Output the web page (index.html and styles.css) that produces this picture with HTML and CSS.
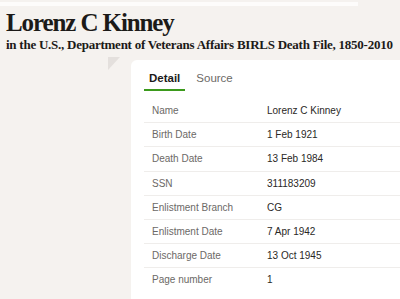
FILE: index.html
```html
<!DOCTYPE html>
<html lang="en">
<head>
    <meta charset="UTF-8">
    <title>Lorenz C Kinney</title>
    <link rel="stylesheet" href="styles.css">
</head>
<body>
    <div class="topbar"></div>
    <header class="heading">
        <h1>Lorenz C Kinney</h1>
        <h2>in the U.S., Department of Veterans Affairs BIRLS Death File, 1850-2010</h2>
    </header>

    <div class="layout">
        <div class="aside">
            <div class="fold"></div>
        </div>
        <div class="card">
            <nav class="tabs">
                <span class="tab active">Detail</span>
                <span class="tab">Source</span>
            </nav>
            <table class="facts">
                <tr><td>Name</td><td>Lorenz C Kinney</td></tr>
                <tr><td>Birth Date</td><td>1 Feb 1921</td></tr>
                <tr><td>Death Date</td><td>13 Feb 1984</td></tr>
                <tr><td>SSN</td><td>311183209</td></tr>
                <tr><td>Enlistment Branch</td><td>CG</td></tr>
                <tr><td>Enlistment Date</td><td>7 Apr 1942</td></tr>
                <tr><td>Discharge Date</td><td>13 Oct 1945</td></tr>
                <tr><td>Page number</td><td>1</td></tr>
            </table>
        </div>
    </div>
</body>
</html>
```

FILE: styles.css
```css
body {
    margin: 0;
    background: #f5f2ef;
    font-family: "Liberation Sans", Arial, sans-serif;
    overflow: hidden;
}
.topbar {
    height: 4px;
    width: 358px;
    margin-top: 2px;
    background: #fdfcfb;
}
.heading {
    padding: 3px 0 0 6px;
    font-family: "Liberation Serif", "Times New Roman", serif;
    color: #1c1a18;
    white-space: nowrap;
}
h1 {
    margin: 0;
    font-size: 25px;
    line-height: 27px;
    letter-spacing: -1.1px;
}
h2 {
    margin: 0;
    font-size: 13px;
    line-height: 18px;
    letter-spacing: -0.25px;
}
.layout {
    display: flex;
    margin-top: 6px;
}
.aside {
    width: 131px;
    flex-shrink: 0;
}
.fold {
    width: 0;
    height: 0;
    margin: -3px 0 0 108px;
    border-top: 13px solid #e4e0dd;
    border-left: 12px solid transparent;
    transform: scaleX(-1);
}
.card {
    flex: 1;
    background: #fff;
    border-radius: 6px 0 0 0;
    padding: 10px 0 20px 13px;
    min-height: 220px;
}
.tabs {
    display: flex;
    gap: 6px;
    font-size: 11.5px;
}
.tab {
    padding: 2px 5px 5px;
    color: #6c6966;
}
.tab.active {
    color: #1c1a18;
    font-weight: bold;
    border-bottom: 2px solid #3b9a1c;
}
.facts {
    width: 100%;
    margin-top: 8px;
    border-collapse: collapse;
    font-size: 10px;
}
.facts td {
    height: 23.2px;
    padding: 0 0 0 8px;
    border-bottom: 1px solid #efedeb;
    color: #2a2826;
}
.facts td:first-child {
    width: 107px;
    color: #6c6966;
}
.facts tr:last-child td {
    border-bottom: none;
}
```
